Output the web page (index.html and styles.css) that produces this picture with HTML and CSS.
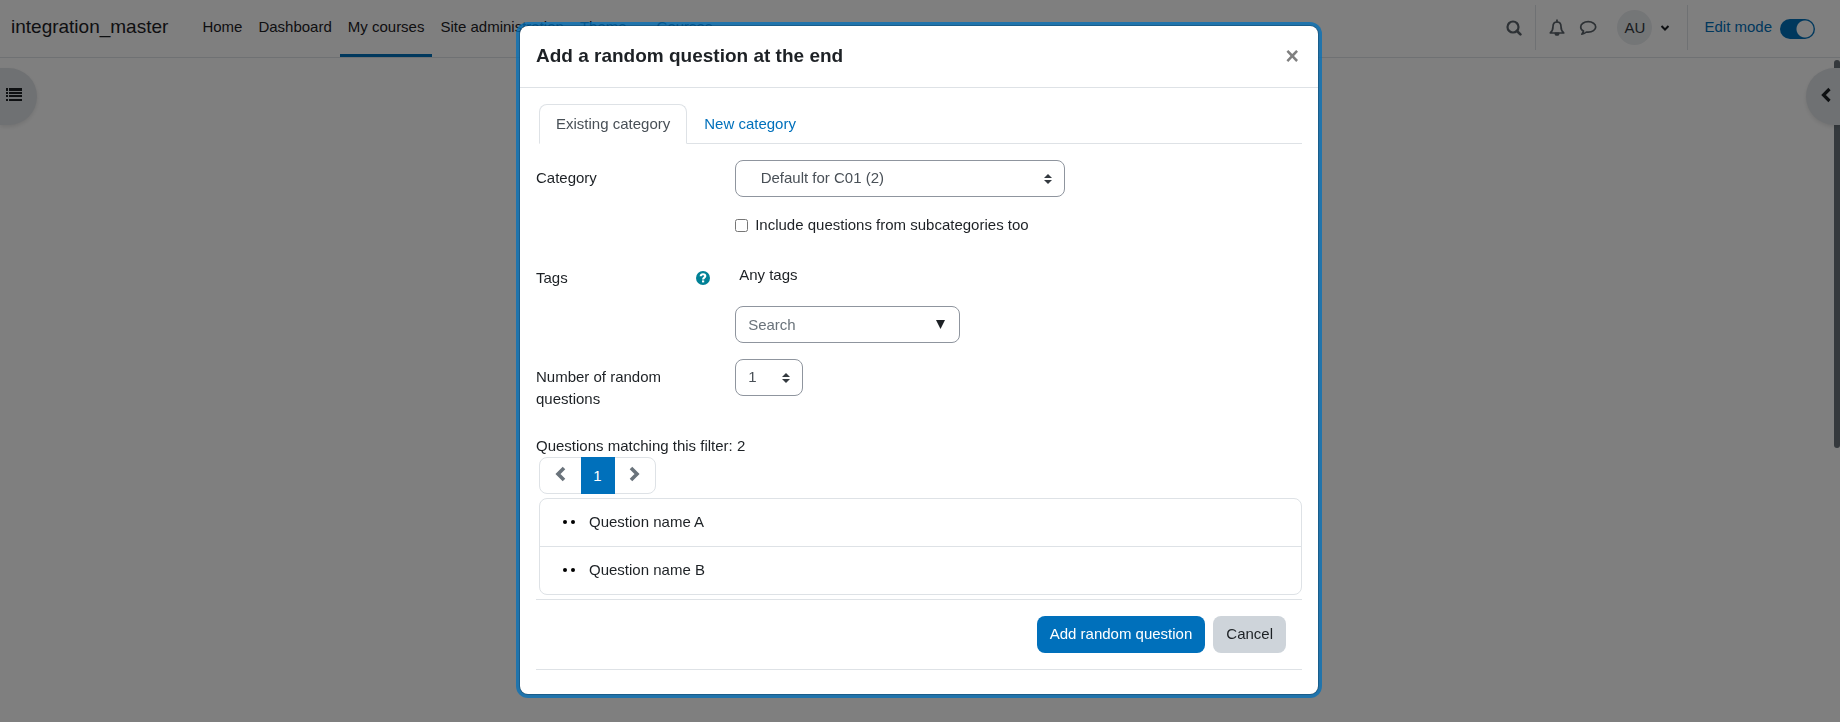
FILE: index.html
```html
<!DOCTYPE html>
<html lang="en">
<head>
    <meta charset="UTF-8">
    <title>integration_master</title>
    <link rel="stylesheet" href="styles.css">
</head>
<body>
    <header class="navbar">
        <a class="brand" href="#">integration_master</a>
        <nav class="main-nav">
            <a href="#">Home</a>
            <a href="#">Dashboard</a>
            <a class="active" href="#">My courses</a>
            <a href="#">Site administration</a>
            <a class="dropdown" href="#">Theme</a>
            <a href="#">Courses</a>
        </nav>
        <div class="user-nav">
            <button type="button" class="icon-btn search-btn" aria-label="Search">
                <svg width="16" height="16" viewBox="0 0 16 16" fill="none" stroke="currentColor"><circle cx="7" cy="7" r="5.500" stroke-width="2.200"/><path d="M11 11l3.400 3.400" stroke-width="2.600" stroke-linecap="round"/></svg>
            </button>
            <div class="nav-group">
                <button type="button" class="icon-btn" aria-label="Notifications">
                    <svg width="16" height="18" viewBox="0 0 16 18" fill="none" stroke="currentColor" stroke-width="1.700" stroke-linejoin="round"><path d="M8 3C5.200 3 4 5 4 7.500C4 10.500 3.200 12.300 1.300 14H14.700C12.800 12.300 12 10.500 12 7.500C12 5 10.800 3 8 3z"/><path d="M8 1.200v1.800" stroke-linecap="round"/><path d="M6.300 14.300a1.700 1.700 0 0 0 3.400 0z" fill="currentColor"/></svg>
                </button>
                <button type="button" class="icon-btn" aria-label="Messages">
                    <svg width="18" height="16" viewBox="0 0 18 16" fill="none" stroke="currentColor" stroke-width="1.700" stroke-linejoin="round"><path d="M9.200 1.700C5 1.700 1.700 4 1.700 6.900C1.700 8.600 2.800 10.100 4.500 11C4.300 12.300 3.700 13.200 2.800 14.200C4.800 13.900 6.300 13.100 7.400 12C8 12.100 8.600 12.100 9.200 12.100C13.400 12.100 16.700 9.800 16.700 6.900C16.700 4 13.400 1.700 9.200 1.700z"/></svg>
                </button>
                <button type="button" class="user-menu" aria-label="User menu">
                    <span class="avatar">AU</span>
                    <svg width="10" height="8" viewBox="0 0 10 8" fill="none" stroke="currentColor" stroke-width="2"><path d="M1.500 2l3.500 3.500L8.500 2"/></svg>
                </button>
            </div>
            <label class="edit-mode">Edit mode
                <input type="checkbox" class="switch" checked>
            </label>
        </div>
    </header>

    <main class="page">
        <button type="button" class="drawer-toggle" aria-label="Open course index">
            <svg width="16" height="14" viewBox="0 0 16 14" fill="currentColor"><path d="M0 0h2v3H0zM3 0h13v3H3zM0 4h2v2H0zM3 4h13v2H3zM0 7h2v2H0zM3 7h13v2H3zM0 11h2v2H0zM3 11h13v2H3z"/></svg>
        </button>
        <button type="button" class="drawer-toggle drawer-right" aria-label="Open block drawer">
            <svg width="12" height="16" viewBox="0 0 12 16" fill="none" stroke="currentColor" stroke-width="3.200"><path d="M9.500 2L3.500 8l6 6"/></svg>
        </button>
        <div class="scrollbar"></div>
    </main>

    <div class="overlay">
        <section class="modal" role="dialog" aria-labelledby="modal-title">
            <div class="modal-header">
                <h5 id="modal-title">Add a random question at the end</h5>
                <button type="button" class="close" aria-label="Close">&times;</button>
            </div>
            <div class="modal-body">
                <div class="tabs">
                    <a class="active" href="#">Existing category</a>
                    <a href="#">New category</a>
                </div>

                <form>
                    <div class="form-row">
                        <label class="form-label" for="category">Category</label>
                        <div class="select-wrap">
                            <select id="category" class="control category">
                                <option>&nbsp;&nbsp;&nbsp;Default for C01 (2)</option>
                            </select>
                            <svg class="arrows" width="8" height="10" viewBox="0 0 8 10" fill="currentColor"><path d="M4 0L0 4h8zM4 10L0 6h8z"/></svg>
                        </div>
                    </div>

                    <div class="form-row check-row">
                        <label class="check">
                            <input type="checkbox">Include questions from subcategories too
                        </label>
                    </div>

                    <div class="form-row tags-row">
                        <div class="form-label">
                            <label for="tags">Tags</label>
                            <button type="button" class="help" aria-label="Help with Tags">
                                <svg width="14" height="14" viewBox="0 0 14 14"><circle cx="7" cy="7" r="7" fill="#008196"/><path d="M4.700 5.300C4.800 3.900 5.800 3.200 7 3.200c1.300 0 2.300.8 2.300 1.900C9.300 6.600 7.100 6.600 7.100 8.400" fill="none" stroke="#fff" stroke-width="2.100"/><path d="M6 9.400h2.200v2H6z" fill="#fff"/></svg>
                            </button>
                        </div>
                        <div class="tags">
                            <div class="any-tags">Any tags</div>
                            <div class="select-wrap">
                                <input type="text" id="tags" class="control search" placeholder="Search">
                                <svg class="caret" width="9" height="9" viewBox="0 0 9 9" fill="currentColor"><path d="M0 0h9L4.500 9z"/></svg>
                            </div>
                        </div>
                    </div>

                    <div class="form-row">
                        <label class="form-label" for="number">Number of random questions</label>
                        <div class="select-wrap">
                            <select id="number" class="control number">
                                <option>1</option>
                            </select>
                            <svg class="arrows" width="8" height="10" viewBox="0 0 8 10" fill="currentColor"><path d="M4 0L0 4h8zM4 10L0 6h8z"/></svg>
                        </div>
                    </div>

                    <div class="matching">Questions matching this filter: 2</div>
                    <div class="pagination">
                        <button type="button" aria-label="Previous page">
                            <svg width="12" height="16" viewBox="0 0 12 16" fill="none" stroke="currentColor" stroke-width="3.600"><path d="M10 2L4 8l6 6"/></svg>
                        </button>
                        <button type="button" class="current">1</button>
                        <button type="button" aria-label="Next page">
                            <svg width="12" height="16" viewBox="0 0 12 16" fill="none" stroke="currentColor" stroke-width="3.600"><path d="M2 2l6 6-6 6"/></svg>
                        </button>
                    </div>

                    <ul class="questions">
                        <li>
                            <svg width="12" height="4" viewBox="0 0 12 4"><circle cx="2" cy="2" r="2"/><circle cx="10" cy="2" r="2"/></svg>
                            Question name A
                        </li>
                        <li>
                            <svg width="12" height="4" viewBox="0 0 12 4"><circle cx="2" cy="2" r="2"/><circle cx="10" cy="2" r="2"/></svg>
                            Question name B
                        </li>
                    </ul>

                    <div class="actions">
                        <button type="submit" class="btn btn-primary">Add random question</button>
                        <button type="button" class="btn">Cancel</button>
                    </div>
                </form>
            </div>
        </section>
    </div>
</body>
</html>
```
FILE: styles.css
```css
* {
    box-sizing: border-box;
}

body {
    margin: 0;
    min-height: 100vh;
    background: #fff;
    color: #1d2125;
    font-family: "Liberation Sans", Arial, sans-serif;
    font-size: 15px;
    line-height: 22px;
    overflow: hidden;
}

a {
    color: #0070bb;
    text-decoration: none;
}

button,
input,
select {
    font: inherit;
    color: inherit;
}

button {
    padding: 0;
    border: none;
    background: none;
    cursor: pointer;
}

svg {
    display: block;
}

/* top bar */
.navbar {
    display: flex;
    height: 58px;
    padding: 0 25px 0 11px;
    border-bottom: 1px solid #dee2e6;
}

.brand {
    align-self: center;
    margin-right: 26px;
    padding-bottom: 4px;
    color: #1d2125;
    font-size: 19px;
}

.main-nav {
    display: flex;
}

.main-nav a {
    display: flex;
    align-items: center;
    padding: 0 8px;
    border-bottom: 3px solid transparent;
    color: #1d2125;
}

.main-nav .active {
    border-bottom-color: #0070bb;
}

.main-nav .dropdown {
    padding-right: 22px;
}

.user-nav {
    display: flex;
    align-items: center;
    height: 55px;
    margin-left: auto;
    color: #6a737b;
}

.search-btn {
    margin-right: 13px;
}

.nav-group {
    display: flex;
    align-items: center;
    gap: 14px;
    height: 45px;
    padding: 0 17px 0 13px;
    border-left: 1px solid #dee2e6;
    border-right: 1px solid #dee2e6;
}

.icon-btn {
    color: #5b636a;
}

.user-menu {
    display: flex;
    align-items: center;
    gap: 8px;
    margin-left: 6px;
    color: #1d2125;
}

.avatar {
    width: 35px;
    border-radius: 50%;
    background: #e9ecef;
    color: #343a40;
    line-height: 35px;
}

.edit-mode {
    display: flex;
    align-items: center;
    gap: 8px;
    margin-left: 16px;
    padding-bottom: 1px;
    color: #0070bb;
}

.switch {
    appearance: none;
    width: 35px;
    height: 20px;
    margin: 4px 0 0;
    border-radius: 10px;
    background: radial-gradient(circle at 25px 10px, #fff 8px, #0070bb 9px);
}

/* drawers */
.page {
    display: flex;
    justify-content: space-between;
    padding-top: 10px;
}

.drawer-toggle {
    display: flex;
    align-items: center;
    width: 37px;
    height: 57px;
    padding: 0 0 3px 6px;
    border-radius: 0 30px 30px 0;
    background: #dee2e6;
    box-shadow: 0 2px 4px rgba(0, 0, 0, 0.1);
}

.drawer-right {
    width: 34px;
    padding-left: 14px;
    border-radius: 30px 0 0 30px;
    z-index: 1;
}

.scrollbar {
    position: absolute;
    top: 60px;
    right: 0;
    width: 6px;
    height: 388px;
    border-radius: 3px;
    background: #6a737b;
}

/* dialog */
.overlay {
    position: fixed;
    inset: 0;
    z-index: 2;
    padding: 25px 2px 0 0;
    background: rgba(0, 0, 0, 0.5);
}

.modal {
    max-width: 800px;
    margin: 0 auto;
    border: 1px solid rgba(0, 0, 0, 0.2);
    border-radius: 9px;
    background: #fff;
    background-clip: padding-box;
    box-shadow: 0 0 0 3px rgba(0, 112, 187, 0.75);
}

.modal-header {
    display: flex;
    align-items: center;
    justify-content: space-between;
    height: 62px;
    padding: 0 16px 2px;
    border-bottom: 1px solid #dee2e6;
}

.modal-header h5 {
    margin: 0;
    font-size: 19px;
}

.close {
    padding: 0 3px;
    color: #808080;
    font-size: 23px;
    font-weight: bold;
}

.modal-body {
    padding: 16px 16px 24px;
}

.tabs {
    display: flex;
    margin-left: 3px;
    border-bottom: 1px solid #dee2e6;
}

.tabs a {
    margin-bottom: -1px;
    padding: 8px 16px;
    border: 1px solid transparent;
    border-radius: 8px 8px 0 0;
}

.tabs .active {
    border-color: #dee2e6 #dee2e6 #fff;
    color: #495057;
}

form {
    padding-top: 16px;
}

.form-row {
    display: flex;
    align-items: flex-start;
    margin-bottom: 16px;
}

.form-label {
    display: flex;
    justify-content: space-between;
    width: 26%;
    padding: 7px 25px 0 0;
}

.select-wrap {
    position: relative;
}

.control {
    display: block;
    appearance: none;
    height: 37px;
    padding: 0 12px 1px;
    border: 1px solid #8f959e;
    border-radius: 8px;
    background: #fff;
    color: #495057;
}

.control::placeholder {
    color: #6a737b;
}

.category {
    width: 330px;
}

.search {
    width: 225px;
}

.number {
    width: 68px;
}

.arrows,
.caret {
    position: absolute;
    top: 14px;
    right: 13px;
    color: #343a40;
    pointer-events: none;
}

.caret {
    right: 15px;
    color: #1d2125;
}

.check-row {
    margin: 0 0 31px 26%;
}

.check {
    display: flex;
    align-items: center;
    gap: 7px;
    padding-top: 1px;
}

.check input {
    width: 13px;
    height: 13px;
    margin: 0;
}

.tags-row .form-label {
    padding-top: 0;
}

.help {
    align-self: center;
}

.any-tags {
    margin: -3px 0 20px;
    padding-left: 4px;
}

.matching {
    margin-top: 25px;
}

/* question list */
.pagination {
    display: flex;
    width: 117px;
    height: 37px;
    margin-left: 3px;
    border: 1px solid #dee2e6;
    border-radius: 8px;
    color: #6a737b;
}

.pagination button {
    display: flex;
    flex: 1;
    align-items: center;
    justify-content: center;
    padding-bottom: 3px;
}

.pagination .current {
    flex: none;
    width: 34px;
    margin: -1px 0;
    padding: 0;
    background: #0070bb;
    color: #fff;
}

.questions {
    margin: 4px 0 4px 3px;
    padding: 0;
    border: 1px solid #dee2e6;
    border-radius: 8px;
    list-style: none;
}

.questions li {
    display: flex;
    align-items: center;
    gap: 14px;
    height: 47px;
    padding: 0 0 1px 23px;
}

.questions li + li {
    height: 48px;
    border-top: 1px solid #dee2e6;
}

.actions {
    display: flex;
    justify-content: flex-end;
    gap: 8px;
    padding: 16px;
    border-top: 1px solid #dee2e6;
    border-bottom: 1px solid #dee2e6;
}

.btn {
    height: 37px;
    padding: 0 13px 1px;
    border-radius: 8px;
    background: #ced4da;
}

.btn-primary {
    background: #0070bb;
    color: #fff;
}
```
